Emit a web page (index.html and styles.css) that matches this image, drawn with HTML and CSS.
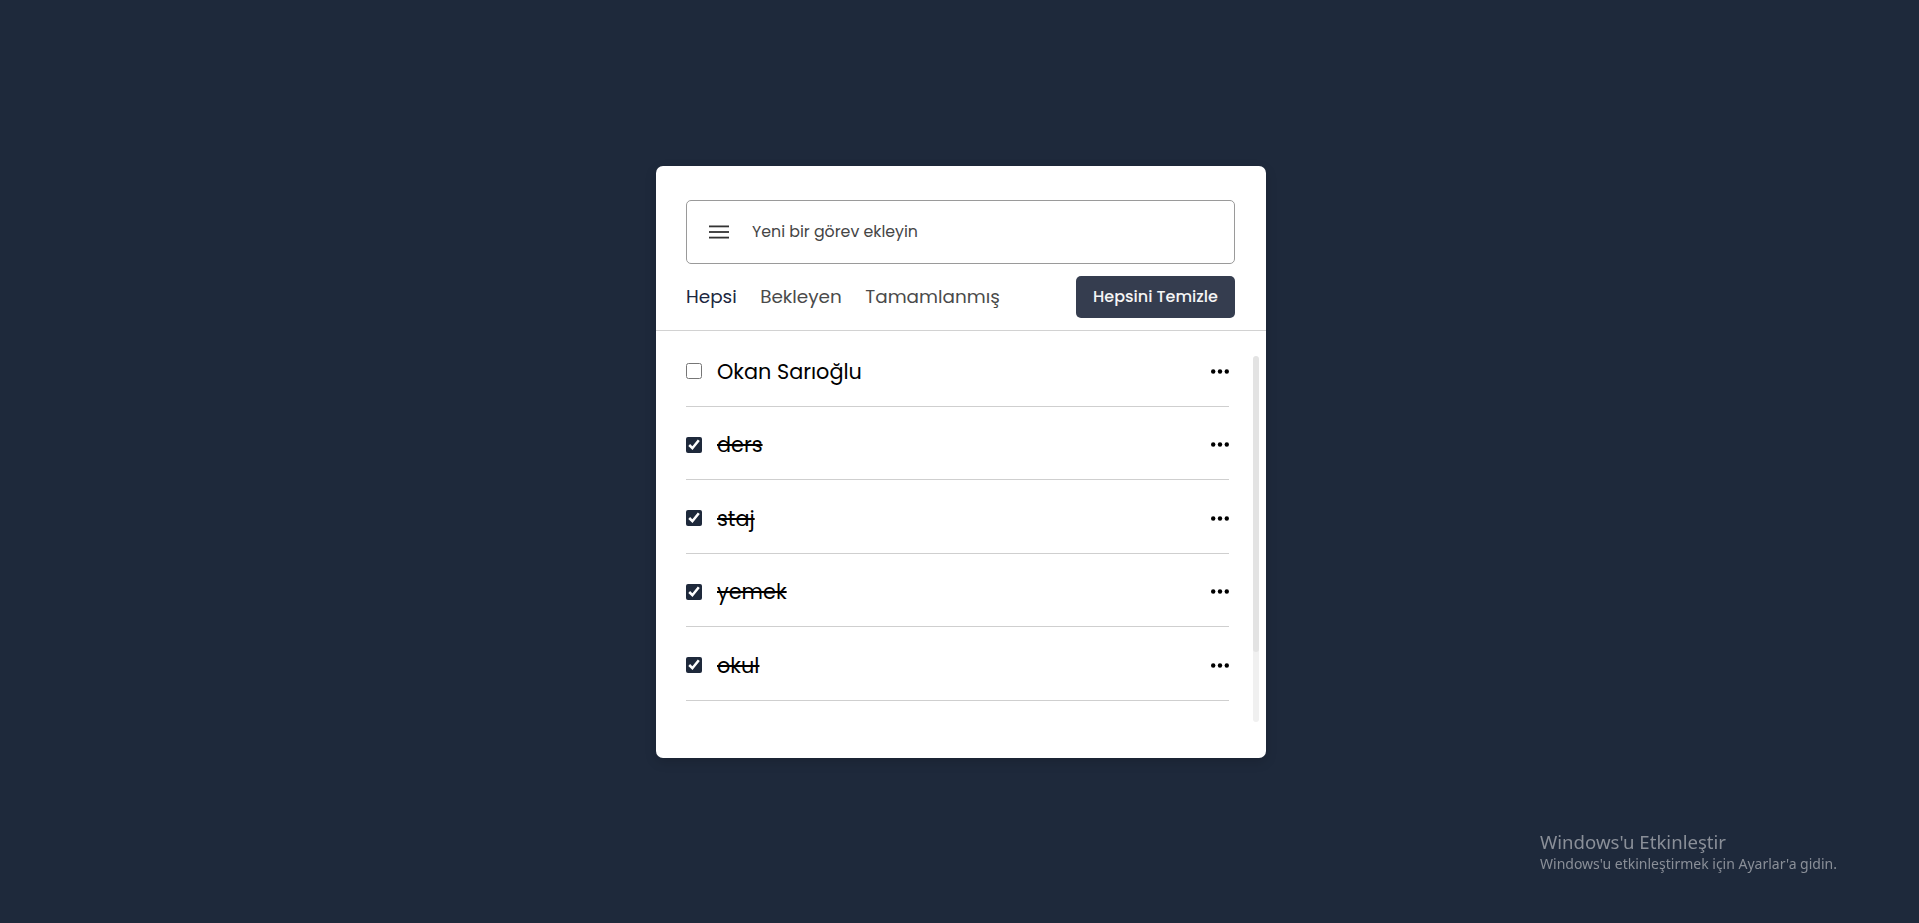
FILE: index.html
```html
<!DOCTYPE html>
<html lang="tr">
<head>
<meta charset="utf-8">
<title>Yapılacaklar</title>
<link rel="stylesheet" href="styles.css">
</head>
<body>
<main class="page">
  <section class="card">
    <header class="card-head">
      <label class="task-input">
        <svg class="menu-icon" width="20" height="14" viewBox="0 0 20 14" aria-hidden="true">
          <rect x="0" y="0.5" width="20" height="1.8" fill="#333"/>
          <rect x="0" y="6.1" width="20" height="1.8" fill="#333"/>
          <rect x="0" y="11.7" width="20" height="1.8" fill="#333"/>
        </svg>
        <input type="text" placeholder="Yeni bir görev ekleyin">
      </label>
      <div class="controls">
        <nav class="filters">
          <span class="filter active">Hepsi</span>
          <span class="filter">Bekleyen</span>
          <span class="filter">Tamamlanmış</span>
        </nav>
        <button class="clear-btn">Hepsini Temizle</button>
      </div>
    </header>
    <div class="body">
      <ul class="task-list">
        <li class="task">
          <input type="checkbox" class="check">
          <span class="task-name">Okan Sarıoğlu</span>
          <svg class="dots" width="18" height="5" viewBox="0 0 18 5"><circle cx="2.2" cy="2.5" r="2.2"/><circle cx="9" cy="2.5" r="2.2"/><circle cx="15.8" cy="2.5" r="2.2"/></svg>
        </li>
        <li class="task done">
          <input type="checkbox" class="check" checked>
          <span class="task-name">ders</span>
          <svg class="dots" width="18" height="5" viewBox="0 0 18 5"><circle cx="2.2" cy="2.5" r="2.2"/><circle cx="9" cy="2.5" r="2.2"/><circle cx="15.8" cy="2.5" r="2.2"/></svg>
        </li>
        <li class="task done">
          <input type="checkbox" class="check" checked>
          <span class="task-name">staj</span>
          <svg class="dots" width="18" height="5" viewBox="0 0 18 5"><circle cx="2.2" cy="2.5" r="2.2"/><circle cx="9" cy="2.5" r="2.2"/><circle cx="15.8" cy="2.5" r="2.2"/></svg>
        </li>
        <li class="task done">
          <input type="checkbox" class="check" checked>
          <span class="task-name">yemek</span>
          <svg class="dots" width="18" height="5" viewBox="0 0 18 5"><circle cx="2.2" cy="2.5" r="2.2"/><circle cx="9" cy="2.5" r="2.2"/><circle cx="15.8" cy="2.5" r="2.2"/></svg>
        </li>
        <li class="task done">
          <input type="checkbox" class="check" checked>
          <span class="task-name">okul</span>
          <svg class="dots" width="18" height="5" viewBox="0 0 18 5"><circle cx="2.2" cy="2.5" r="2.2"/><circle cx="9" cy="2.5" r="2.2"/><circle cx="15.8" cy="2.5" r="2.2"/></svg>
        </li>
      </ul>
      <div class="scroll-track"><div class="scroll-thumb"></div></div>
    </div>
  </section>
</main>
<div class="activation">
  <div class="act-title">Windows'u Etkinleştir</div>
  <div class="act-sub">Windows'u etkinleştirmek için Ayarlar'a gidin.</div>
</div>
</body>
</html>
```
FILE: styles.css
```css
* { box-sizing: border-box; }

html, body {
  margin: 0;
  padding: 0;
  height: 100%;
}

body {
  background: #1e293b;
  font-family: "Poppins", "Open Sans", sans-serif;
  color: #000;
  overflow: hidden;
}

.page {
  height: 100vh;
  display: flex;
  align-items: center;
  justify-content: center;
  padding-left: 3px;
}

.card {
  width: 610px;
  height: 592px;
  background: #fff;
  border-radius: 7px;
  box-shadow: 0 4px 12px rgba(0, 0, 0, 0.15);
  display: flex;
  flex-direction: column;
}

.card-head {
  padding: 34px 31px 12px 30px;
  border-bottom: 1px solid #d2d2d2;
}

.task-input {
  display: flex;
  align-items: center;
  height: 64px;
  border: 1px solid #9a9a9a;
  border-radius: 5px;
  padding: 0 0 0 22px;
}

.menu-icon {
  flex: none;
  display: block;
}

.task-input input {
  flex: 1;
  border: none;
  outline: none;
  background: transparent;
  font-family: inherit;
  font-size: 15.8px;
  color: #333;
  margin-left: 23px;
  padding: 0;
}

.task-input input::placeholder {
  color: #454545;
}

.controls {
  display: flex;
  align-items: center;
  justify-content: space-between;
  margin-top: 12px;
}

.filters {
  display: flex;
  gap: 23.5px;
}

.filter {
  font-size: 18.4px;
  color: #4a4a4a;
}

.filter.active {
  color: #1b2740;
}

.clear-btn {
  width: 159px;
  height: 42px;
  border: none;
  border-radius: 5px;
  background: #353d4f;
  color: #f5f5f5;
  font-family: inherit;
  font-size: 16px;
  font-weight: 500;
  padding: 0;
}

.body {
  flex: 1;
  display: flex;
  padding-left: 30px;
  min-height: 0;
}

.task-list {
  list-style: none;
  margin: 2.5px 0 0;
  padding: 0;
  width: 543px;
}

.task {
  display: flex;
  align-items: center;
  padding: 26.5px 0 23px;
  height: 73.5px;
  border-bottom: 1px solid #cfcfcf;
}

.check {
  flex: none;
  width: 16px;
  height: 16px;
  margin: 0 15px 0 0;
  accent-color: #1e293b;
}

.task-name {
  flex: 1;
  font-size: 20.8px;
  line-height: 23px;
}

.task.done .task-name {
  text-decoration: line-through;
}

.dots {
  flex: none;
  display: block;
  fill: #000;
}

.scroll-track {
  flex: none;
  width: 6px;
  height: 366px;
  margin: 25px 0 0 24px;
  border-radius: 3px;
  background: #f0f0f0;
  overflow: hidden;
}

.scroll-thumb {
  height: 296px;
  background: #e3e3e3;
  border-radius: 3px;
}

.activation {
  position: fixed;
  left: 1540px;
  top: 829px;
  color: #8a8f98;
  font-family: "Noto Sans", "Open Sans", sans-serif;
}

.act-title {
  font-size: 18.6px;
  line-height: 26px;
}

.act-sub {
  font-size: 14px;
  line-height: 18px;
}
```
